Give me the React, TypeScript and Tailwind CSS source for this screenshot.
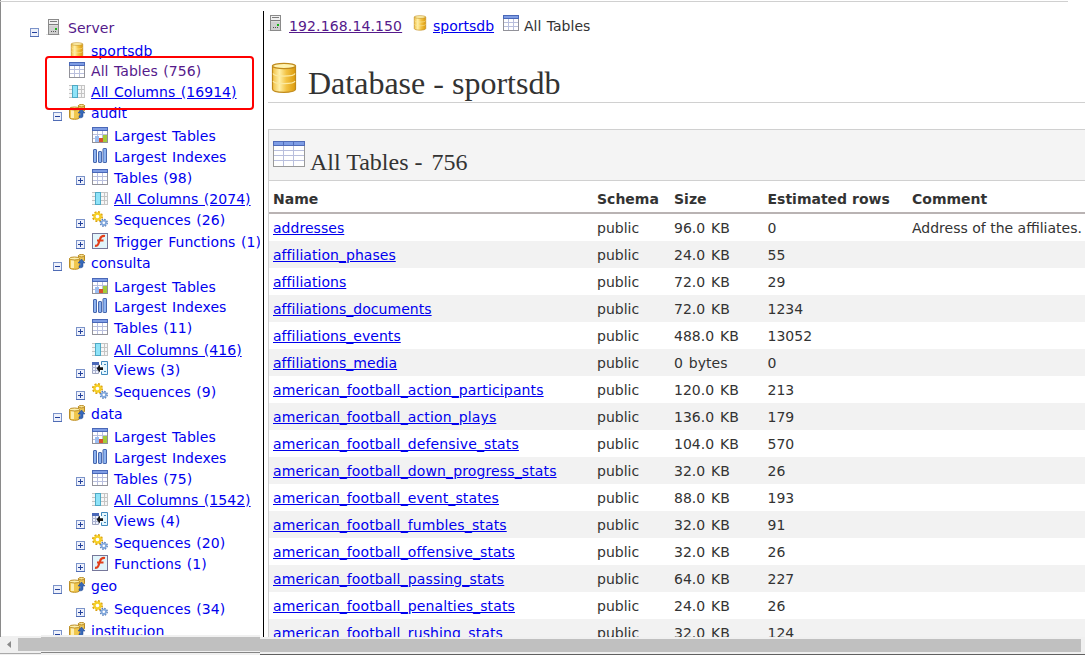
import React from "react";

type IconName = "server" | "db" | "schema" | "table" | "columns" | "chart" | "index" | "seq" | "fn" | "view";

function Server() {
  return (
    <svg width="16" height="16" viewBox="0 0 16 16" className="block shrink-0">
      <rect x="0" y="15" width="14" height="1" fill="#dedede" />
      <rect x="2.5" y=".5" width="10" height="15" fill="#dcdcdc" stroke="#8a8a8a" />
      <rect x="3" y="1" width="9" height="4" fill="#f0f0f0" />
      <path d="M4 2.500h7M3 5.500h9" stroke="#7d7d7d" />
      <rect x="3" y="7" width="9" height="8" fill="#cfcfcf" />
      <rect x="9" y="9" width="2" height="2" fill="#19b319" />
      <path d="M5 12.500h1M7 12.500h1M9 12.500h1" stroke="#555" />
    </svg>
  );
}

function Cylinder({ size }: { size: number }) {
  return (
    <svg width={size} height={size} viewBox="0 0 32 32" className="block shrink-0">
      <defs>
        <linearGradient id="gold" x1="0" x2="1">
          <stop offset="0" stopColor="#f1c044" />
          <stop offset=".3" stopColor="#fff0a8" />
          <stop offset=".6" stopColor="#f3c344" />
          <stop offset="1" stopColor="#dc9b0c" />
        </linearGradient>
      </defs>
      <path d="M4.500 4v23c0 4.500 23 4.500 23 0V4z" fill="url(#gold)" stroke="#c08a1b" strokeWidth="1.2" />
      <path d="M5 11.500c1 3.500 21 3.500 22 0M5 19c1 3.500 21 3.500 22 0" fill="none" stroke="#fbe9a0" strokeWidth="1.2" />
      <ellipse cx="16" cy="4" rx="11.500" ry="2.600" fill="#fff3b0" stroke="#c08a1b" strokeWidth="1.2" />
    </svg>
  );
}

function TableBase({ children }: { children?: React.ReactNode }) {
  return (
    <svg width="16" height="16" viewBox="0 0 16 16" className="block shrink-0" shapeRendering="crispEdges">
      <rect x="0" y="0" width="16" height="16" fill="#92929a" />
      <rect x="1" y="4" width="14" height="11" fill="#fff" />
      <rect x="0" y="0" width="16" height="4" fill="#4a68b8" />
      <rect x="1" y="1" width="14" height="2" fill="#7f9de4" />
      <path d="M5.500 4v11M10.500 4v11M1 7.500h14M1 11.500h14" stroke="#b9bfdd" fill="none" />
      {children}
    </svg>
  );
}

function Icon({ name }: { name: IconName }) {
  switch (name) {
    case "server":
      return <Server />;
    case "db":
      return <Cylinder size={16} />;
    case "table":
      return <TableBase />;
    case "chart":
      return (
        <TableBase>
          <rect x="3" y="9" width="4" height="6" fill="#9cbdf0" />
          <rect x="7" y="11" width="4" height="4" fill="#d9502c" />
          <rect x="11" y="8" width="4" height="7" fill="#a5cc3a" />
        </TableBase>
      );
    case "columns":
      return (
        <svg width="16" height="16" viewBox="0 0 16 16" className="block shrink-0" shapeRendering="crispEdges">
          <rect x="0" y="2" width="16" height="13" fill="#c4c4c4" />
          <path d="M0 3h3v3H0zM0 7h3v3H0zM0 11h3v3H0zM9 3h3v3H9zM9 7h3v3H9zM9 11h3v3H9zM13 3h2v3h-2zM13 7h2v3h-2zM13 11h2v3h-2z" fill="#f6f6f6" />
          <rect x="3" y="2" width="6" height="13" fill="#4fa9c4" />
          <rect x="4" y="3" width="4" height="11" fill="#8fe3f8" />
        </svg>
      );
    case "index":
      return (
        <svg width="16" height="16" viewBox="0 0 16 16" className="block shrink-0">
          <g fill="#8cb2ee" stroke="#4868ae">
            <rect x="1.500" y="1.500" width="3" height="13" rx=".5" />
            <rect x="6.500" y="3.500" width="3" height="11" rx=".5" />
            <rect x="11" y=".5" width="3.500" height="14" rx=".5" />
          </g>
        </svg>
      );
    case "seq":
      return (
        <svg width="16" height="16" viewBox="0 0 16 16" className="block shrink-0">
          <circle cx="5.500" cy="5.500" r="4.500" fill="none" stroke="#dca010" strokeWidth="2" strokeDasharray="1.900 1.634" />
          <circle cx="5.500" cy="5.500" r="3" fill="none" stroke="#f5cf25" strokeWidth="2.400" />
          <circle cx="11.800" cy="11.800" r="3.300" fill="none" stroke="#5279b4" strokeWidth="1.600" strokeDasharray="1.400 1.192" />
          <circle cx="11.800" cy="11.800" r="2.200" fill="none" stroke="#82a8dc" strokeWidth="1.800" />
        </svg>
      );
    case "fn":
      return (
        <svg width="16" height="16" viewBox="0 0 16 16" className="block shrink-0">
          <rect x=".5" y=".5" width="15" height="15" fill="#e2f5fb" stroke="#76779a" />
          <path d="M13 3c-3-.4-4 .3-4.800 2.700L6.300 11c-.6 1.600-1.500 2-3.300 1.700M5 7.500h6.500" fill="none" stroke="#e2401b" strokeWidth="2.200" />
        </svg>
      );
    case "view":
      return (
        <svg width="16" height="16" viewBox="0 0 16 16" className="block shrink-0">
          <path d="M.5 2.500h6v10h-6z" fill="#eef1fb" stroke="#9ca3bd" />
          <path d="M0 1h7v3H0z" fill="#4a68b8" />
          <path d="M0 6.500h6M0 9.500h6M3.500 4v8" stroke="#a9b2d0" />
          <path d="M9.500 .500h6v13h-6v-3M9.500 4V.500" fill="#e4f6fd" stroke="#4089bd" />
          <path d="M12 3.500h2M12 10.500h2" stroke="#4089bd" />
          <path d="M4.500 7.500l3.500-4v2.700h3v2.700H8v2.700z" fill="#161616" />
        </svg>
      );
    case "schema":
      return (
        <svg width="17" height="16" viewBox="0 0 17 16" className="block shrink-0">
          <path d="M9.500 1.500v5c0 1.300 6 1.300 6 0v-5z" fill="#e9c458" stroke="#b98a22" />
          <ellipse cx="12.500" cy="1.700" rx="3" ry="1.200" fill="#fbe79a" stroke="#b98a22" />
          <path d="M.5 4.500v9c0 2.400 10 2.400 10 0v-9z" fill="#f0c74d" stroke="#bd8e24" />
          <path d="M2 6h3v8H2z" fill="#fdeeb0" />
          <ellipse cx="5.500" cy="4.500" rx="5" ry="1.500" fill="#fdf0ac" stroke="#bd8e24" />
          <path d="M12.500 5L16 9h-2v3c0 1.500-1.500 2-4 1.800v-2c1.200 0 1.500-.2 1.500-.8V9H9z" fill="#3668b8" stroke="#21458c" strokeWidth=".5" />
        </svg>
      );
  }
}

function Toggle({ open }: { open: boolean }) {
  return (
    <svg width="9" height="9" viewBox="0 0 9 9" className="block shrink-0" shapeRendering="crispEdges">
      <rect x=".5" y=".5" width="8" height="8" fill="#eef1fb" stroke="#7b93c9" />
      <path d="M0 8.500h9" stroke="#4f6cb5" />
      <path d={open ? "M2 4.500h5" : "M2 4.500h5M4.500 2v5"} stroke="#23419c" />
    </svg>
  );
}

const heights = { 20: "h-5", 21: "h-[21px]", 22: "h-[22px]", 23: "h-[23px]", 24: "h-6" };
const indents = ["pl-[29px]", "pl-[52px]", "pl-[75px]"];
const drops = { 8: "pt-2", 9: "pt-[9px]", 10: "pt-2.5" };

type Row = [
  level: 0 | 1 | 2,
  toggle: "-" | "+" | "",
  icon: IconName,
  text: string,
  height: keyof typeof heights,
  drop?: keyof typeof drops,
];

const tree: Row[] = [
  [0, "-", "server", "Server", 23, 10],
  [1, "", "db", "sportsdb", 20],
  [1, "", "table", "All Tables (756)", 21],
  [1, "", "columns", "All Columns (16914)", 21],
  [1, "-", "schema", "audit", 23],
  [2, "", "chart", "Largest Tables", 21],
  [2, "", "index", "Largest Indexes", 21],
  [2, "+", "table", "Tables (98)", 21, 8],
  [2, "", "columns", "All Columns (2074)", 21],
  [2, "+", "seq", "Sequences (26)", 22],
  [2, "+", "fn", "Trigger Functions (1)", 21, 8],
  [1, "-", "schema", "consulta", 24],
  [2, "", "chart", "Largest Tables", 20],
  [2, "", "index", "Largest Indexes", 21],
  [2, "+", "table", "Tables (11)", 22],
  [2, "", "columns", "All Columns (416)", 20],
  [2, "+", "view", "Views (3)", 22],
  [2, "+", "seq", "Sequences (9)", 22],
  [1, "-", "schema", "data", 23],
  [2, "", "chart", "Largest Tables", 21],
  [2, "", "index", "Largest Indexes", 21],
  [2, "+", "table", "Tables (75)", 21, 8],
  [2, "", "columns", "All Columns (1542)", 21],
  [2, "+", "view", "Views (4)", 22],
  [2, "+", "seq", "Sequences (20)", 21, 8],
  [2, "+", "fn", "Functions (1)", 22],
  [1, "-", "schema", "geo", 23],
  [2, "+", "seq", "Sequences (34)", 22],
  [1, "-", "schema", "institucion", 22],
];

const tables: [string, string, string, string?][] = [
  ["addresses", "96.0 KB", "0", "Address of the affiliates."],
  ["affiliation_phases", "24.0 KB", "55"],
  ["affiliations", "72.0 KB", "29"],
  ["affiliations_documents", "72.0 KB", "1234"],
  ["affiliations_events", "488.0 KB", "13052"],
  ["affiliations_media", "0 bytes", "0"],
  ["american_football_action_participants", "120.0 KB", "213"],
  ["american_football_action_plays", "136.0 KB", "179"],
  ["american_football_defensive_stats", "104.0 KB", "570"],
  ["american_football_down_progress_stats", "32.0 KB", "26"],
  ["american_football_event_states", "88.0 KB", "193"],
  ["american_football_fumbles_stats", "32.0 KB", "91"],
  ["american_football_offensive_stats", "32.0 KB", "26"],
  ["american_football_passing_stats", "64.0 KB", "227"],
  ["american_football_penalties_stats", "24.0 KB", "26"],
  ["american_football_rushing_stats", "32.0 KB", "124"],
];

const columns = "grid grid-cols-[324px_77px_93.5px_144.5px_1fr] pl-1 whitespace-nowrap";

function Tree() {
  return (
    <nav className="h-[636px] w-[259px] shrink-0 overflow-hidden pt-[18px] text-[14px] leading-5">
      {tree.map(([level, toggle, icon, text, height, drop = 9], i) => (
        <div key={i} className={`flex items-start whitespace-nowrap ${indents[level]} ${heights[height]}`}>
          <span className={`w-4 shrink-0 ${drops[drop]}`}>{toggle && <Toggle open={toggle === "-"} />}</span>
          <span className="w-[22px] shrink-0 pt-px">
            <Icon name={icon} />
          </span>
          <a
            className={`tracking-[0.05px] [word-spacing:1px] ${icon === "server" || i === 2 ? "text-[#551a8b]" : "text-[#0000ee]"} ${icon === "columns" ? "underline" : ""}`}
          >
            {text}
          </a>
        </div>
      ))}
    </nav>
  );
}

export default function App() {
  return (
    <div className="relative flex h-[655px] w-[1085px] flex-col overflow-hidden bg-white font-['DejaVu_Sans',Verdana,sans-serif] text-[#333]">
      <div className="absolute top-px left-0 h-px w-[1068px] bg-[#d0d0d0]" />
      <div className="flex h-[637px] border-l border-[#8a8a8a]">
        <Tree />
        <div className="mt-[11px] ml-[3px] w-px shrink-0 bg-black" />
        <main className="ml-1 min-w-0 flex-1 overflow-hidden">
          <div className="flex h-[42px] items-start pt-[15px] text-[14px] leading-5">
            <Server />
            <a className="mt-px ml-[5px] w-[123px] tracking-[0.13px] text-[#551a8b]">
              <span className="underline">192.168.14.150</span>
            </a>
            <Cylinder size={16} />
            <a className="mt-px ml-[5px] w-[70px] text-[#0000ee] underline">sportsdb</a>
            <Icon name="table" />
            <span className="mt-px ml-[5px] [word-spacing:1px]">All Tables</span>
          </div>
          <h1 className="flex h-[61px] items-start border-b border-[#d0d0d0] pt-5 font-['Liberation_Serif',serif] text-[32px] leading-[42px]">
            <Cylinder size={32} />
            <span className="ml-2">Database - sportsdb</span>
          </h1>
          <section className="mt-[26px] border-t border-l border-[#d0d0d0]">
            <h2 className="flex h-[51px] items-start border-b border-[#d0d0d0] bg-[#f4f4f4] pt-[11px] pl-1 font-['Liberation_Serif',serif] text-[24px] leading-[42px]">
              <svg width="32" height="26" viewBox="0 0 32 26" className="block shrink-0" shapeRendering="crispEdges">
                <rect width="32" height="26" fill="#999" />
                <rect x="1" y="5" width="30" height="20" fill="#fff" />
                <rect width="32" height="5" fill="#506bb7" />
                <path d="M1 1h9v3H1zM11 1h9v3h-9zM21 1h10v3H21z" fill="#7e9de5" />
                <path d="M10.500 5v20M20.500 5v20M1 9.500h30M1 14.500h30M1 19.500h30" stroke="#b9bfdd" />
              </svg>
              <span className="ml-[5px]">All Tables -</span>
              <span className="ml-[9px]">756</span>
            </h2>
            <div className={`${columns} h-[33px] border-b-2 border-[#b9b3b3] text-[14px] leading-9 font-bold`}>
              <span>Name</span>
              <span>Schema</span>
              <span>Size</span>
              <span>Estimated rows</span>
              <span>Comment</span>
            </div>
            {tables.map(([name, size, rows, comment]) => (
              <div key={name} className={`${columns} h-[27px] text-[14px] leading-7 odd:bg-white even:bg-[#f2f2f2]`}>
                <span className="text-[#0000ee]">
                  <a className={`underline ${name.startsWith("american") ? "tracking-[0.13px]" : "tracking-[0.04px]"}`}>
                    {name}
                  </a>
                </span>
                <span>public</span>
                <span className="[word-spacing:1.5px]">{size}</span>
                <span>{rows}</span>
                <span>{comment}</span>
              </div>
            ))}
          </section>
        </main>
      </div>
      <div className="absolute top-[56px] left-[45px] h-[54px] w-[209px] rounded-[4px] border-[2.5px] border-[#ff0000]" />
      <div className="flex h-[18px] items-start bg-[#f0f0f0]">
        <svg width="18" height="15" viewBox="0 0 18 15" className="block">
          <path d="M11 4v7L7 7.500z" fill="#8a8a8a" />
        </svg>
        <div className="mt-px h-[13px] w-[23px] bg-[#c0c0c0]" />
        <div className="h-[14px] w-[219px] bg-[#c0c0c0]" />
        <div className="mt-[2px] h-[13px] w-[821px] bg-[#c0c0c0]" />
      </div>
      <div className="absolute top-[636px] left-px h-px w-[40px] bg-[#f0f0f0]" />
      <div className="absolute top-[635px] left-[41px] h-[2px] w-[219px] bg-[#f0f0f0]" />
      <div className="absolute top-[653px] left-0 h-px w-[41px] bg-[#aaa]" />
      <div className="absolute top-[652px] left-[41px] h-px w-[219px] bg-[#858585]" />
      <div className="absolute top-[654px] left-[260px] h-px w-[825px] bg-[#606060]" />
    </div>
  );
}
